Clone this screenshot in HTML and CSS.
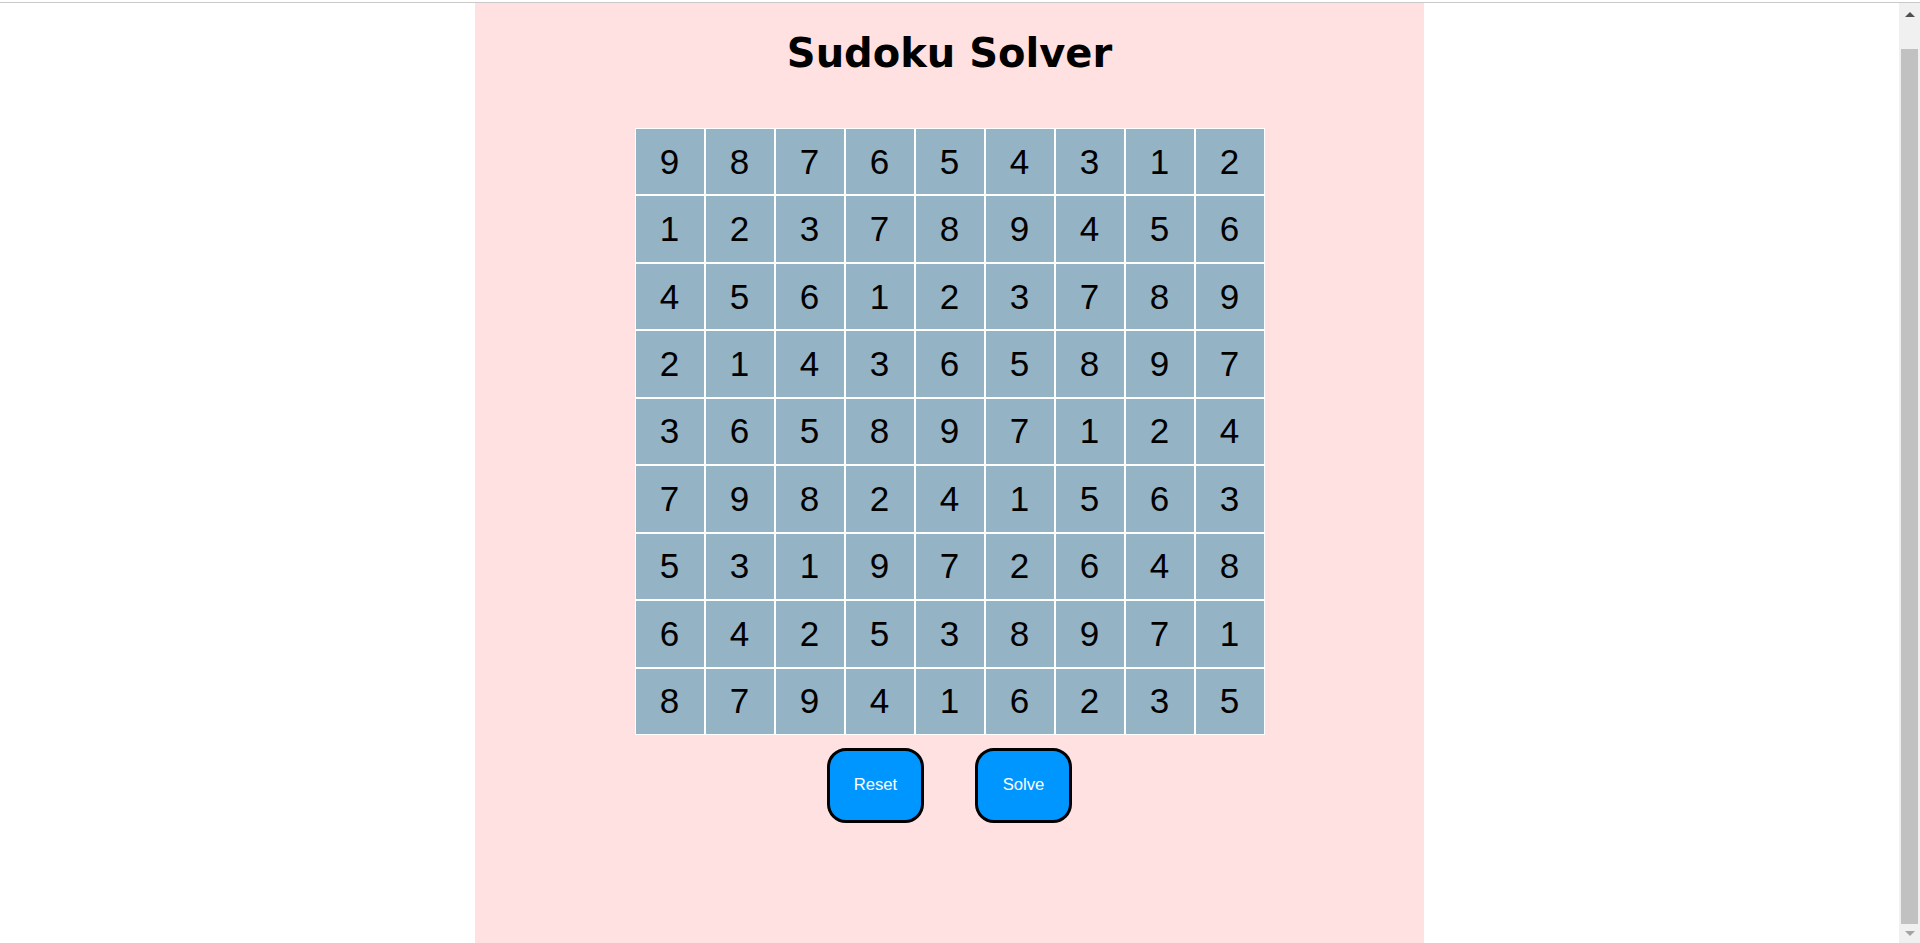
FILE: index.html
```html
<!DOCTYPE html>
<html lang="en">
<head>
<meta charset="utf-8">
<title>Sudoku Solver</title>
<link rel="stylesheet" href="styles.css">
</head>
<body>
<div class="chrome-line"></div>
<div class="window">
  <main class="viewport">
    <section class="panel">
      <h1 class="title">Sudoku Solver</h1>
      <div class="board">
        <div class="cell">9</div><div class="cell">8</div><div class="cell">7</div><div class="cell">6</div><div class="cell">5</div><div class="cell">4</div><div class="cell">3</div><div class="cell">1</div><div class="cell">2</div>
        <div class="cell">1</div><div class="cell">2</div><div class="cell">3</div><div class="cell">7</div><div class="cell">8</div><div class="cell">9</div><div class="cell">4</div><div class="cell">5</div><div class="cell">6</div>
        <div class="cell">4</div><div class="cell">5</div><div class="cell">6</div><div class="cell">1</div><div class="cell">2</div><div class="cell">3</div><div class="cell">7</div><div class="cell">8</div><div class="cell">9</div>
        <div class="cell">2</div><div class="cell">1</div><div class="cell">4</div><div class="cell">3</div><div class="cell">6</div><div class="cell">5</div><div class="cell">8</div><div class="cell">9</div><div class="cell">7</div>
        <div class="cell">3</div><div class="cell">6</div><div class="cell">5</div><div class="cell">8</div><div class="cell">9</div><div class="cell">7</div><div class="cell">1</div><div class="cell">2</div><div class="cell">4</div>
        <div class="cell">7</div><div class="cell">9</div><div class="cell">8</div><div class="cell">2</div><div class="cell">4</div><div class="cell">1</div><div class="cell">5</div><div class="cell">6</div><div class="cell">3</div>
        <div class="cell">5</div><div class="cell">3</div><div class="cell">1</div><div class="cell">9</div><div class="cell">7</div><div class="cell">2</div><div class="cell">6</div><div class="cell">4</div><div class="cell">8</div>
        <div class="cell">6</div><div class="cell">4</div><div class="cell">2</div><div class="cell">5</div><div class="cell">3</div><div class="cell">8</div><div class="cell">9</div><div class="cell">7</div><div class="cell">1</div>
        <div class="cell">8</div><div class="cell">7</div><div class="cell">9</div><div class="cell">4</div><div class="cell">1</div><div class="cell">6</div><div class="cell">2</div><div class="cell">3</div><div class="cell">5</div>
      </div>
      <div class="actions">
        <button class="btn" type="button">Reset</button>
        <button class="btn" type="button">Solve</button>
      </div>
    </section>
  </main>
  <div class="scrollbar">
    <div class="sb-button sb-up"><span class="arrow-up"></span></div>
    <div class="sb-gap"></div>
    <div class="sb-thumb"></div>
    <div class="sb-button sb-down"><span class="arrow-down"></span></div>
  </div>
</div>
</body>
</html>
```
FILE: styles.css
```css
html, body {
  height: 100%;
}

body {
  margin: 0;
  background: #ffffff;
  display: flex;
  flex-direction: column;
  overflow: hidden;
  font-family: "Liberation Sans", Arial, sans-serif;
}

.chrome-line {
  height: 2px;
  border-bottom: 1px solid #c9c9c9;
  background: #ffffff;
  flex: none;
}

.window {
  flex: 1;
  display: flex;
  min-height: 0;
}

.viewport {
  flex: 1;
  display: flex;
  justify-content: center;
}

.panel {
  width: 50%;
  background: #ffe1e1;
  display: flex;
  flex-direction: column;
  align-items: center;
}

.title {
  margin: 27px 0 0;
  font-family: "DejaVu Sans", Verdana, sans-serif;
  font-weight: bold;
  font-size: 40px;
  line-height: 47px;
  color: #000000;
}

.board {
  margin-top: 51px;
  display: grid;
  grid-template-columns: repeat(9, 70px);
  grid-auto-rows: 67.44px;
}

.cell {
  box-sizing: border-box;
  border: 1px solid #ffffff;
  background: #94b3c5;
  display: flex;
  align-items: center;
  justify-content: center;
  font-family: "Liberation Sans", Arial, sans-serif;
  font-size: 35px;
  color: #000000;
}

.actions {
  margin-top: 13px;
  display: flex;
  gap: 51px;
}

.btn {
  box-sizing: border-box;
  width: 97px;
  height: 75px;
  border: 3px solid #000000;
  border-radius: 19px;
  background: #0096ff;
  color: #ffffff;
  font-family: "Liberation Sans", Arial, sans-serif;
  font-size: 16.67px;
  padding: 0;
}

.scrollbar {
  width: 21px;
  flex: none;
  background: #f0f0f0;
  display: flex;
  flex-direction: column;
}

.sb-button {
  display: flex;
  align-items: center;
  justify-content: center;
  flex: none;
}

.sb-up {
  height: 23px;
}

.sb-gap {
  height: 23px;
  flex: none;
}

.sb-thumb {
  flex: 1;
  margin: 0 2px;
  background: #c1c1c1;
}

.sb-down {
  height: 19px;
}

.arrow-up {
  width: 0;
  height: 0;
  border-left: 5px solid transparent;
  border-right: 5px solid transparent;
  border-bottom: 5px solid #505050;
}

.arrow-down {
  width: 0;
  height: 0;
  border-left: 5px solid transparent;
  border-right: 5px solid transparent;
  border-top: 5px solid #a3a3a3;
}
```
